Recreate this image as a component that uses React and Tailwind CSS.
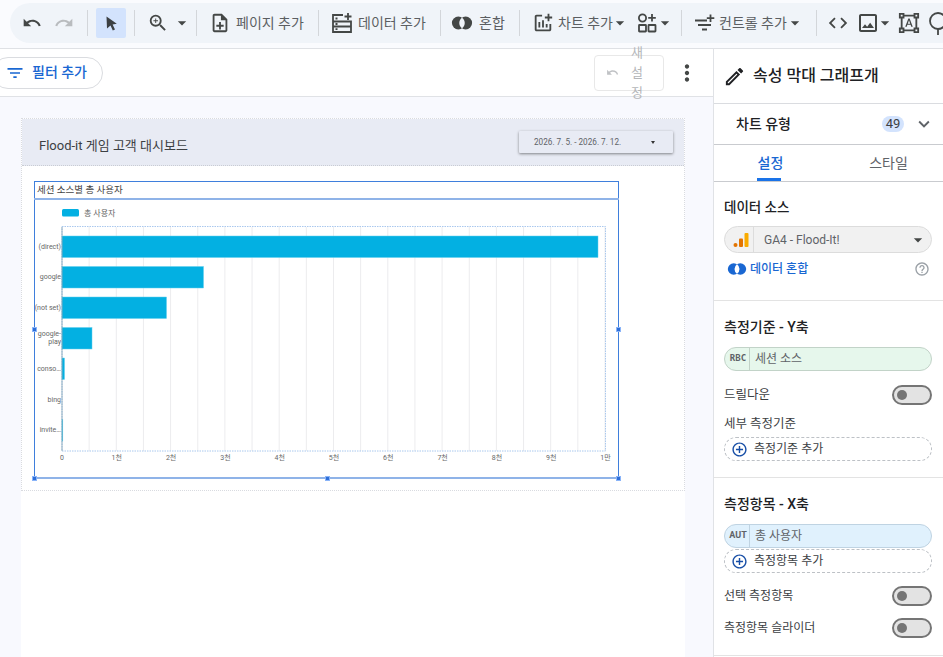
import {
  MdUndo,
  MdRedo,
  MdOutlineZoomIn,
  MdOutlineNoteAdd,
  MdOutlineAddchart,
  MdArrowDropDown,
  MdCode,
  MdOutlineImage,
  MdOutlineFormatShapes,
  MdFilterList,
  MdMoreVert,
  MdOutlineEdit,
  MdExpandMore,
  MdHelpOutline,
  MdAddCircleOutline,
} from "react-icons/md";

const FONT = "font-['Roboto','Noto_Sans_CJK_KR',sans-serif]";

function Sep() {
  return <div className="w-px h-[26px] bg-[#d3d6da] shrink-0" />;
}

function Caret({ className = "" }) {
  return <MdArrowDropDown size={20} className={`shrink-0 text-[#444746] ${className}`} />;
}

function BlendIcon({ color = "#444746", lens = "#f0f4f9", size = 22 }) {
  return (
    <svg width={size} height={size} viewBox="0 0 24 24" className="shrink-0">
      <circle cx="8" cy="12" r="7" fill={color} />
      <circle cx="16" cy="12" r="7" fill={color} />
      <path d="M12 6.26A7 7 0 0 1 12 17.74A7 7 0 0 1 12 6.26z" fill={lens} />
    </svg>
  );
}

function DataAddIcon() {
  return (
    <svg width="22" height="22" viewBox="0 0 22 22" className="shrink-0" fill="none" stroke="#444746" strokeWidth="1.8">
      <path d="M12 3H2v17h18V9.5H2M2 14.5h18" />
      <path d="M17 1v7M13.5 4.5h7" />
      <path d="M4.5 6.5h2M4.5 12h2M4.5 17.2h2" />
    </svg>
  );
}

function ChartAddIcon() {
  return <MdOutlineAddchart size={22} className="shrink-0 text-[#444746]" />;
}

function CommunityIcon() {
  return (
    <svg width="20" height="20" viewBox="0 0 20 20" className="shrink-0" fill="none" stroke="#444746" strokeWidth="1.8">
      <circle cx="5.5" cy="5" r="3.6" />
      <rect x="2" y="12" width="7" height="6.5" rx="0.5" />
      <rect x="11.5" y="12" width="7" height="6.5" rx="0.5" />
      <path d="M15 1v7.5M11.2 4.8h7.6" />
    </svg>
  );
}

function ControlAddIcon() {
  return (
    <svg width="22" height="22" viewBox="0 0 22 22" className="shrink-0" fill="none" stroke="#444746" strokeWidth="1.8">
      <path d="M1 8.5h12M4 13h13M8 17.5h5" />
      <path d="M16.5 2.5v7.5M12.8 6.2h7.5" />
    </svg>
  );
}

function CursorIcon() {
  return (
    <svg width="18" height="18" viewBox="0 0 18 18">
      <path d="M4.5 2.5 14.8 9.8 10.6 10.6 13 15.4 10.8 16.4 8.5 11.6 5 14.5z" fill="#3c4043" />
    </svg>
  );
}

function AnalyticsIcon() {
  return (
    <svg width="18" height="18" viewBox="0 0 18 18">
      <rect x="12.5" y="2" width="4" height="14" rx="1" fill="#f9ab00" />
      <rect x="7" y="7.5" width="4" height="8.5" rx="1" fill="#e37400" />
      <circle cx="3.5" cy="14" r="2" fill="#e37400" />
    </svg>
  );
}

function Toolbar() {
  return (
    <div className="h-[49px] shrink-0 bg-[#fafbfe] border-b border-[#dfe1e5] pt-[3px] pl-[10px]">
      <div className="h-[40px] w-[940px] bg-[#f0f4f9] rounded-l-[20px] flex items-center text-[14px] text-[#5b5e62]">
        <div className="w-[6px] shrink-0" />
        <div className="w-[32px] flex justify-center shrink-0">
          <MdUndo size={20} className="text-[#444746]" />
        </div>
        <div className="w-[32px] flex justify-center shrink-0">
          <MdRedo size={20} className="text-[#b9bcbf]" />
        </div>
        <div className="w-[7px] shrink-0" />
        <Sep />
        <div className="w-[8px] shrink-0" />
        <div className="w-[30px] h-[30px] rounded-[2px] bg-[#d3e3fd] flex items-center justify-center shrink-0">
          <CursorIcon />
        </div>
        <div className="w-[8px] shrink-0" />
        <Sep />
        <div className="w-[12px] shrink-0" />
        <MdOutlineZoomIn size={22} className="shrink-0 text-[#444746]" />
        <div className="w-[3px] shrink-0" />
        <Caret />
        <div className="w-[4px] shrink-0" />
        <Sep />
        <div className="w-[12px] shrink-0" />
        <MdOutlineNoteAdd size={22} className="shrink-0 text-[#444746]" />
        <span className="ml-[5px] w-[69px] shrink-0 whitespace-nowrap">페이지 추가</span>
        <div className="w-[13px] shrink-0" />
        <Sep />
        <div className="w-[12px] shrink-0" />
        <DataAddIcon />
        <span className="ml-[5px] w-[68px] shrink-0 whitespace-nowrap">데이터 추가</span>
        <div className="w-[14px] shrink-0" />
        <Sep />
        <div className="w-[10px] shrink-0" />
        <BlendIcon />
        <span className="ml-[6px] w-[26px] shrink-0 whitespace-nowrap">혼합</span>
        <div className="w-[14px] shrink-0" />
        <Sep />
        <div className="w-[12px] shrink-0" />
        <ChartAddIcon />
        <span className="ml-[4px] w-[53px] shrink-0 whitespace-nowrap">차트 추가</span>
        <Caret className="-ml-[1px]" />
        <div className="w-[7px] shrink-0" />
        <CommunityIcon />
        <Caret className="-ml-[2px]" />
        <div className="w-[6px] shrink-0" />
        <Sep />
        <div className="w-[12px] shrink-0" />
        <ControlAddIcon />
        <span className="ml-[3px] w-[66px] shrink-0 whitespace-nowrap">컨트롤 추가</span>
        <Caret />
        <div className="w-[11px] shrink-0" />
        <Sep />
        <div className="w-[10px] shrink-0" />
        <MdCode size={22} className="shrink-0 text-[#444746]" />
        <div className="w-[7px] shrink-0" />
        <MdOutlineImage size={24} className="shrink-0 text-[#444746]" />
        <Caret className="-ml-[5px]" />
        <div className="w-[3px] shrink-0" />
        <MdOutlineFormatShapes size={22} className="shrink-0 text-[#444746]" />
        <div className="w-[8px] shrink-0" />
        <svg width="20" height="26" viewBox="0 0 20 26" className="shrink-0" fill="none" stroke="#444746" strokeWidth="1.8">
          <circle cx="10" cy="11" r="8" />
          <path d="M10 19v6" />
        </svg>
      </div>
    </div>
  );
}

function HeaderBar() {
  return (
    <div className="h-[48px] shrink-0 bg-white border-b border-[#e0e2e6] flex items-center relative">
      <button className="-ml-[8px] h-[32px] w-[111px] rounded-full border border-[#dadce0] bg-white flex items-center pl-[12px] text-[14px] font-medium text-[#1967d2]">
        <MdFilterList size={20} className="shrink-0 text-[#1967d2]" />
        <span className="ml-[7px] whitespace-nowrap">필터 추가</span>
      </button>
      <div className="flex-1" />
      <button className="h-[36px] w-[70px] rounded-[4px] border border-[#e8e8e8] bg-white flex items-center text-[#b4b6b9] text-[13px] leading-[20px]">
        <MdUndo size={13} className="ml-[11px] shrink-0 text-[#c0c2c5]" />
        <span className="ml-[11px] w-[14px] break-all text-center">새설정</span>
      </button>
      <MdMoreVert size={26} className="ml-[10px] mr-[13px] shrink-0 text-[#444746]" />
    </div>
  );
}

const bars = [
  { label: ["(direct)"], y: 236, x2: 598 },
  { label: ["google"], y: 266.5, x2: 203.5 },
  { label: ["(not set)"], y: 297, x2: 166.5 },
  { label: ["google-", "play"], y: 327.5, x2: 92 },
  { label: ["conso…"], y: 358, x2: 64.5 },
  { label: ["bing"], y: 389, x2: 62 },
  { label: ["invite…"], y: 419.5, x2: 62.8 },
];

const ticks = ["0", "1천", "2천", "3천", "4천", "5천", "6천", "7천", "8천", "9천", "1만"];

function Chart() {
  const gridLines = Array.from({ length: 20 }, (_, i) => 62 + 27.15 * (i + 1));
  return (
    <svg width="585" height="298" viewBox="34 181 585 298" className="absolute left-0 top-0 block opacity-[0.99]">
      <rect x="62" y="209" width="17" height="7.5" rx="1.5" fill="#01b0e2" />
      <text x="84" y="216" fontSize="8" fill="#666">총 사용자</text>
      {gridLines.map((x) => (
        <line key={x} x1={x} x2={x} y1="227" y2="451" stroke="#ececee" strokeWidth="1" />
      ))}
      <rect x="62" y="226.5" width="543.5" height="224.5" fill="none" stroke="#a9c8ee" strokeWidth="1" strokeDasharray="1.5 1" />
      {bars.map((b) => (
        <g key={b.y}>
          {b.x2 > 62.2 && (
            <rect x="62" y={b.y} width={b.x2 - 62} height="21.5" fill="#01b0e2" stroke="#62cfee" strokeWidth="0.5" />
          )}
          {b.label.length === 1 ? (
            <text x="61" y={b.y + 12.5} textAnchor="end" fontSize="7" fill="#666">{b.label[0]}</text>
          ) : (
            <text x="61" y={b.y + 8} textAnchor="end" fontSize="7" fill="#666">
              <tspan x="61">{b.label[0]}</tspan>
              <tspan x="61" dy="8.5">{b.label[1]}</tspan>
            </text>
          )}
        </g>
      ))}
      <line x1="62" x2="62" y1="227" y2="451" stroke="#7f9fb0" strokeWidth="0.8" />
      {ticks.map((t, i) => (
        <text key={t} x={62 + 54.3 * i + (i === 0 ? 0 : 0.5)} y="459.5" textAnchor="middle" fontSize="7" fill="#666">{t}</text>
      ))}
    </svg>
  );
}

function Handle({ className }) {
  return <div className={`absolute w-[5px] h-[5px] bg-[#2f6fd8] border border-[#8ab4f8] ${className}`} />;
}

function Canvas() {
  return (
    <div className="flex-1 min-h-0 bg-[#f8f9fe] pl-[21px] pt-[21px] overflow-hidden">
      <div className="w-[664px] h-[600px] bg-white">
        <div className="relative h-[373px] border border-dotted border-[#d9dbe0]">
          <div className="h-[47px] bg-[#e8ebf4] border-b border-dotted border-[#c9ccd3] flex items-center justify-between pl-[17px] pr-[11px]">
            <span className="mt-[8px] text-[13px] text-[#3c4043] whitespace-nowrap">Flood-it 게임 고객 대시보드</span>
            <div className="w-[154px] h-[22px] bg-[#e8ebf4] rounded-[1px] shadow-[0_1px_3px_rgba(0,0,0,0.45)] flex items-center pl-[15px] pr-[18px] text-[8.2px] text-[#5f6368]">
              <span className="flex-1 whitespace-nowrap">2026. 7. 5. - 2026. 7. 12.</span>
              <div className="w-0 h-0 border-x-[2.5px] border-x-transparent border-t-[3px] border-t-[#333]" />
            </div>
          </div>
          <div className="absolute left-[12px] top-[62px] w-[585px] h-[298px]">
            <Chart />
            <div className="absolute inset-0 border border-[#3f7fdc] border-b-2 border-b-[#8fb3e8]" />
            <div className="absolute left-0 top-0 w-full h-[19px] border-b-2 border-[#8fb3e8] pl-[3px] text-[9.5px] leading-[17px] text-[#444]">
              세션 소스별 총 사용자
            </div>
            <Handle className="-left-[2px] top-[146px]" />
            <Handle className="-right-[2px] top-[146px]" />
            <Handle className="-left-[2px] -bottom-[2px]" />
            <Handle className="left-[291px] -bottom-[2px]" />
            <Handle className="-right-[2px] -bottom-[2px]" />
          </div>
        </div>
      </div>
    </div>
  );
}

function Toggle() {
  return (
    <div className="w-[40px] h-[20px] rounded-full border-[2.5px] border-[#757575] bg-[#e3e3e3] flex items-center pl-[3px] shrink-0">
      <div className="w-[10px] h-[10px] rounded-full bg-[#757575]" />
    </div>
  );
}

function Chip({ tag, label, bg, border, tagClass = "" }) {
  return (
    <div className={`h-[24px] rounded-full border flex items-center ${bg} ${border}`}>
      <div className={`w-[25px] h-full flex items-center justify-center border-r text-[9px] font-bold text-[#5f6368] pl-[2px] ${border} ${tagClass}`}>
        {tag}
      </div>
      <span className="ml-[5px] text-[12px] text-[#5f6368] whitespace-nowrap">{label}</span>
    </div>
  );
}

function AddRow({ label }) {
  return (
    <div className="h-[24px] rounded-full border border-dashed border-[#bdc1c6] flex items-center pl-[6px]">
      <MdAddCircleOutline size={17} className="shrink-0 text-[#174ea6]" />
      <span className="ml-[6px] text-[12px] text-[#3c4043] whitespace-nowrap">{label}</span>
    </div>
  );
}

function SidePanel() {
  return (
    <aside className="w-[230px] shrink-0 bg-white border-l border-[#e0e2e6] overflow-hidden">
      <div className="h-[55px] border-b border-[#dadce0] flex items-center pl-[9px]">
        <MdOutlineEdit size={23} className="shrink-0 text-[#202124]" />
        <span className="ml-[7px] text-[16px] font-medium text-[#202124] whitespace-nowrap">속성 막대 그래프개</span>
      </div>
      <div className="h-[41px] border-b border-[#c9cbcf] flex items-center pl-[22px] pr-[8px]">
        <span className="text-[14px] font-medium text-[#202124]">차트 유형</span>
        <div className="flex-1" />
        <span className="w-[22px] h-[16px] rounded-full bg-[#d3e3fd] flex items-center justify-center text-[13px] text-[#3c4043]">49</span>
        <MdExpandMore size={22} className="ml-[9px] text-[#5f6368]" />
      </div>
      <div className="h-[37px] border-b border-[#c9cbcf] flex text-[14px]">
        <div className="w-[114px] relative flex items-center justify-center font-medium text-[#1967d2] pr-[1px]">
          설정
          <div className="absolute left-[43px] bottom-0 w-[24px] h-[3px] bg-[#1a73e8]" />
        </div>
        <div className="flex-1 flex items-center justify-center text-[#5f6368] pl-[6px]">스타일</div>
      </div>
      <section className="h-[119px] border-b border-[#e3e3e3] pl-[10px] pr-[11px] pt-[16px]">
        <h3 className="text-[13.5px] leading-[18px] font-medium text-[#202124]">데이터 소스</h3>
        <div className="mt-[10px] h-[27px] rounded-full bg-[#f1f1f1] border border-[#dcdcdc] flex items-center">
          <div className="w-[29px] h-full flex items-center justify-center border-r border-[#dcdcdc] pl-[3px] shrink-0">
            <AnalyticsIcon />
          </div>
          <span className="ml-[10px] flex-1 text-[12px] text-[#5f6368] whitespace-nowrap">GA4 - Flood-It!</span>
          <Caret className="mr-[3px]" />
        </div>
        <div className="mt-[6px] h-[20px] flex items-center pl-[3px] pr-[2px]">
          <BlendIcon color="#1967d2" lens="#ffffff" size={20} />
          <span className="ml-[3px] flex-1 text-[12px] font-medium text-[#1967d2] whitespace-nowrap">데이터 혼합</span>
          <MdHelpOutline size={16} className="text-[#9aa0a6]" />
        </div>
      </section>
      <section className="h-[177px] border-b border-[#e3e3e3] pl-[10px] pr-[11px] pt-[17px]">
        <h3 className="text-[14px] leading-[18px] font-medium text-[#202124]">측정기준 - Y축</h3>
        <div className="mt-[11px]">
          <Chip tag="RBC" label="세션 소스" bg="bg-[#e6f7ec]" border="border-[#c2d3c8]" tagClass="font-['DejaVu_Sans_Mono',monospace]" />
        </div>
        <div className="mt-[14px] flex items-center justify-between">
          <span className="text-[12.5px] text-[#3c4043]">드릴다운</span>
          <Toggle />
        </div>
        <div className="mt-[10px] text-[12.5px] leading-[18px] text-[#3c4043]">세부 측정기준</div>
        <div className="mt-[4px]">
          <AddRow label="측정기준 추가" />
        </div>
      </section>
      <section className="h-[178px] border-b border-[#e3e3e3] pl-[10px] pr-[11px] pt-[17px]">
        <h3 className="text-[14px] leading-[18px] font-medium text-[#202124]">측정항목 - X축</h3>
        <div className="mt-[11px]">
          <Chip tag="AUT" label="총 사용자" bg="bg-[#e0f1fd]" border="border-[#bfd3e2]" />
        </div>
        <div className="mt-[1px]">
          <AddRow label="측정항목 추가" />
        </div>
        <div className="mt-[13px] flex items-center justify-between">
          <span className="text-[12px] text-[#3c4043]">선택 측정항목</span>
          <Toggle />
        </div>
        <div className="mt-[12px] flex items-center justify-between">
          <span className="text-[12px] text-[#3c4043]">측정항목 슬라이더</span>
          <Toggle />
        </div>
      </section>
    </aside>
  );
}

export default function App() {
  return (
    <div className={`w-[943px] h-[657px] overflow-hidden flex flex-col bg-white ${FONT}`}>
      <Toolbar />
      <div className="flex-1 min-h-0 flex">
        <main className="w-[713px] shrink-0 flex flex-col min-h-0">
          <HeaderBar />
          <Canvas />
        </main>
        <SidePanel />
      </div>
    </div>
  );
}
